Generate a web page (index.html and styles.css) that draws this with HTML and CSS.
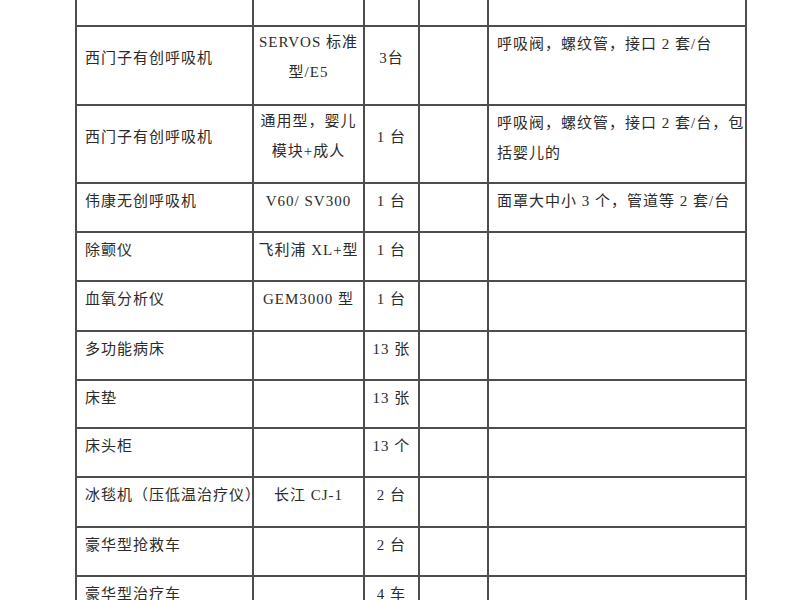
FILE: index.html
```html
<!DOCTYPE html>
<html lang="zh-CN">
<head>
<meta charset="utf-8">
<title>设备清单</title>
<link rel="stylesheet" href="styles.css">
</head>
<body>
<div class="sheet">
  <div class="c top">床边多参数监护仪</div>
  <div class="c ctr top">迈瑞 T8</div>
  <div class="c ctr top">13 台</div>
  <div class="c"></div>
  <div class="c"></div>

  <div class="c mid">西门子有创呼吸机</div>
  <div class="c ctr two">SERVOS 标准<br>型/E5</div>
  <div class="c ctr mid">3台</div>
  <div class="c"></div>
  <div class="c">呼吸阀，螺纹管，接口 2 套/台</div>

  <div class="c mid">西门子有创呼吸机</div>
  <div class="c ctr two">通用型，婴儿<br>模块+成人</div>
  <div class="c ctr mid">1 台</div>
  <div class="c"></div>
  <div class="c two5">呼吸阀，螺纹管，接口 2 套/台，包<br>括婴儿的</div>

  <div class="c">伟康无创呼吸机</div>
  <div class="c ctr">V60/ SV300</div>
  <div class="c ctr">1 台</div>
  <div class="c"></div>
  <div class="c">面罩大中小 3 个，管道等 2 套/台</div>

  <div class="c">除颤仪</div>
  <div class="c ctr">飞利浦 XL+型</div>
  <div class="c ctr">1 台</div>
  <div class="c"></div>
  <div class="c"></div>

  <div class="c">血氧分析仪</div>
  <div class="c ctr">GEM3000 型</div>
  <div class="c ctr">1 台</div>
  <div class="c"></div>
  <div class="c"></div>

  <div class="c">多功能病床</div>
  <div class="c ctr"></div>
  <div class="c ctr">13 张</div>
  <div class="c"></div>
  <div class="c"></div>

  <div class="c">床垫</div>
  <div class="c ctr"></div>
  <div class="c ctr">13 张</div>
  <div class="c"></div>
  <div class="c"></div>

  <div class="c">床头柜</div>
  <div class="c ctr"></div>
  <div class="c ctr">13 个</div>
  <div class="c"></div>
  <div class="c"></div>

  <div class="c">冰毯机（压低温治疗仪）</div>
  <div class="c ctr">长江 CJ-1</div>
  <div class="c ctr">2 台</div>
  <div class="c"></div>
  <div class="c"></div>

  <div class="c">豪华型抢救车</div>
  <div class="c ctr"></div>
  <div class="c ctr">2 台</div>
  <div class="c"></div>
  <div class="c"></div>

  <div class="c">豪华型治疗车</div>
  <div class="c ctr"></div>
  <div class="c ctr">4 车</div>
  <div class="c"></div>
  <div class="c"></div>
</div>
</body>
</html>
```

FILE: styles.css
```css
html, body {
  margin: 0;
  padding: 0;
  background: #ffffff;
}

body {
  font-family: "Liberation Serif", "Noto Sans CJK SC", serif;
  font-size: 15px;
  color: #2b2b2b;
}

.sheet {
  display: grid;
  grid-template-columns: 175px 109px 53px 67px 256px;
  grid-template-rows: 47px 77px 76px 47px 47px 48px 47px 46px 47px 48px 47px 47px;
  gap: 2px;
  padding: 2px;
  background: #4d4d4d;
  width: max-content;
  margin: -24px 0 0 75px;
}

.c {
  background: #ffffff;
  padding: 5px 0 0 8px;
  line-height: 24px;
  letter-spacing: 1px;
  white-space: nowrap;
  overflow: hidden;
}

.ctr {
  text-align: center;
  padding-left: 0;
}

.top {
  padding-top: 3px;
}

.two {
  line-height: 30px;
  padding-top: 0;
}

.two5 {
  line-height: 30px;
  padding-top: 2px;
}

.mid {
  padding-top: 19px;
}
```
